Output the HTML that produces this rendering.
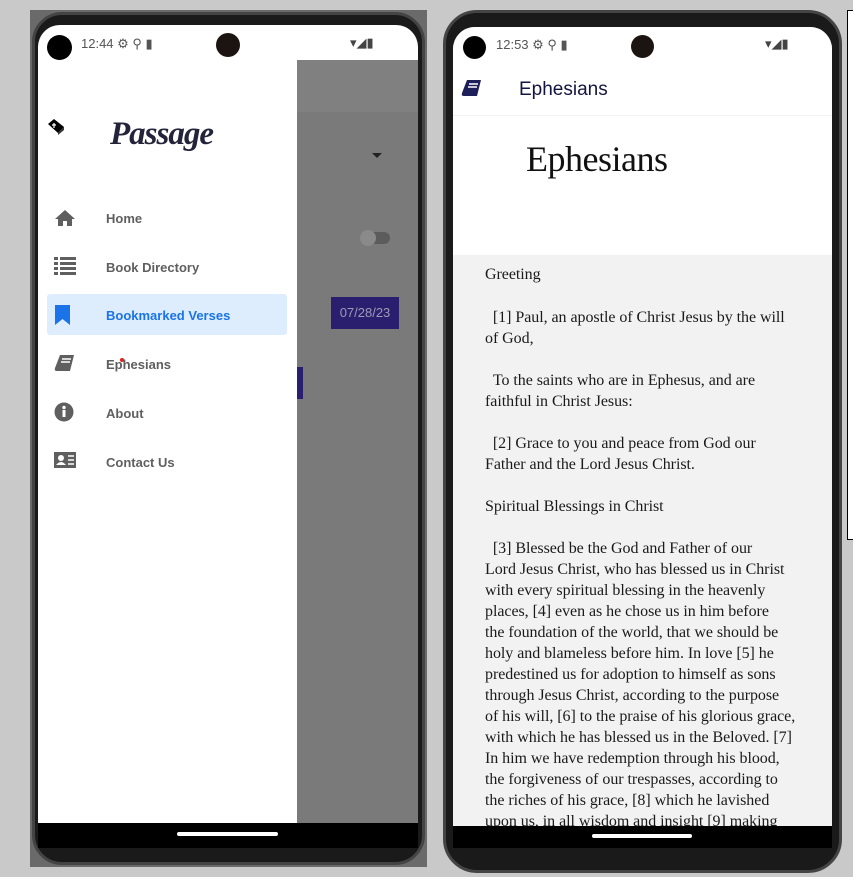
<!DOCTYPE html>
<html><head><meta charset="utf-8"><style>
*{margin:0;padding:0;box-sizing:border-box}
body{width:853px;height:877px;background:#c9c9c9;position:relative;overflow:hidden;font-family:"Liberation Sans",sans-serif}
.abs{position:absolute}
.frame{position:absolute;background:#1a1a1a;border-radius:34px;border:3px solid #444}
.status{font-size:13px;color:#555}
.menu{position:absolute;left:106px;font-size:13px;font-weight:bold;color:#5f5f5f}
.ic{position:absolute;left:54px;width:22px;height:20px}
.bt{position:absolute;left:485px;font-family:"Liberation Serif",serif;font-size:16px;color:#1a1a1a;line-height:21px;white-space:nowrap;letter-spacing:-0.05px}
</style></head><body>
<div class="abs" style="left:30px;top:10px;width:397px;height:857px;background:#6a6a6a"></div>
<div class="frame" style="left:32px;top:12px;width:393px;height:853px;border-radius:30px"></div>
<div class="abs" style="left:38px;top:25px;width:380px;height:810px;background:#fff;border-radius:22px 22px 0 0;overflow:hidden">
  <div class="abs" style="left:259px;top:35px;width:121px;height:52px;background:#808080"></div>
  <div class="abs" style="left:259px;top:87px;width:121px;height:712px;background:#7a7a7a"></div>
  <div class="abs" style="left:334px;top:128px;width:0;height:0;border-left:5px solid transparent;border-right:5px solid transparent;border-top:5px solid #222"></div>
  <div class="abs" style="left:330px;top:207px;width:22px;height:12px;border-radius:6px;background:#5c5c5c"></div>
  <div class="abs" style="left:322px;top:205px;width:16px;height:16px;border-radius:8px;background:#8a8a8a"></div>
  <div class="abs" style="left:293px;top:272px;width:68px;height:32px;background:#2a1f6e;color:#9b9bb5;font-size:13px;line-height:32px;text-align:center">07/28/23</div>
  <div class="abs" style="left:259px;top:342px;width:6px;height:32px;background:#2a1f6e"></div>
</div>
<div class="abs" style="left:38px;top:823px;width:380px;height:25px;background:#000"></div>
<div class="abs" style="left:177px;top:832px;width:101px;height:4px;background:#fff;border-radius:2px"></div>
<div class="abs" style="left:47px;top:35px;width:25px;height:25px;border-radius:50%;background:#000"></div>
<div class="abs status" style="left:81px;top:36px">12:44 ⚙ ⚲ ▮</div>
<div class="abs" style="left:216px;top:33px;width:24px;height:24px;border-radius:50%;background:#1c1410"></div>
<div class="abs status" style="left:350px;top:35px;color:#444">▾◢▮</div>
<svg class="abs" style="left:46px;top:118px" width="22" height="20" viewBox="0 0 22 20"><path d="M2 6 L8 1 L18 9 L12 15 Z" fill="#000"/><path d="M12 15 L18 9 L18 12 L12 17Z" fill="#333"/><path d="M8 5v5M6 7h4" stroke="#fff" stroke-width="1.2"/></svg>
<div class="abs" style="left:110px;top:116px;font-family:'Liberation Serif',serif;font-weight:bold;font-style:italic;font-size:33px;color:#23233a;letter-spacing:-1px">Passage</div>
<svg class="ic" style="top:208px" viewBox="0 0 22 20"><path d="M11 2 L1 11 H4 V18 H9 V13 H13 V18 H18 V11 H21Z" fill="#5f5f5f"/></svg>
<div class="menu" style="top:211px">Home</div>
<svg class="ic" style="top:256px" viewBox="0 0 22 20"><g fill="#5f5f5f"><rect x="0" y="1" width="4" height="3"/><rect x="6" y="1" width="16" height="3"/><rect x="0" y="6" width="4" height="3"/><rect x="6" y="6" width="16" height="3"/><rect x="0" y="11" width="4" height="3"/><rect x="6" y="11" width="16" height="3"/><rect x="0" y="16" width="4" height="3"/><rect x="6" y="16" width="16" height="3"/></g></svg>
<div class="menu" style="top:260px">Book Directory</div>
<div class="abs" style="left:47px;top:294px;width:240px;height:41px;background:#deedfd;border-radius:3px"></div>
<svg class="ic" style="top:305px" viewBox="0 0 22 20"><path d="M1 0 H16 V20 L8.5 14 L1 20Z" fill="#1a73e8"/></svg>
<div class="menu" style="top:308px;color:#1a73e8">Bookmarked Verses</div>
<svg class="ic" style="top:354px" viewBox="0 0 22 20"><path d="M6 1 H20 L16 17 H3 Q0 17 1 14Z" fill="#5f5f5f"/><path d="M8 5h9M7 8h9" stroke="#fff" stroke-width="1.5"/></svg>
<div class="menu" style="top:357px">Ephesians</div>
<div class="abs" style="left:120px;top:358px;width:4px;height:4px;border-radius:50%;background:#e02020"></div>
<svg class="ic" style="top:402px" viewBox="0 0 22 20"><circle cx="10" cy="10" r="9.5" fill="#5f5f5f"/><rect x="8.5" y="8" width="3" height="7" fill="#fff"/><circle cx="10" cy="5.5" r="1.7" fill="#fff"/></svg>
<div class="menu" style="top:406px">About</div>
<svg class="ic" style="top:451px" viewBox="0 0 22 20"><rect x="0" y="1" width="22" height="16" fill="#5f5f5f"/><circle cx="7" cy="7" r="3" fill="#fff"/><path d="M2 14 Q7 8 12 14Z" fill="#fff"/><path d="M14 5h6M14 9h6M14 13h6" stroke="#fff" stroke-width="1.5"/></svg>
<div class="menu" style="top:455px">Contact Us</div>

<div class="frame" style="left:443px;top:10px;width:399px;height:863px;border-radius:34px"></div>
<div class="abs" style="left:453px;top:27px;width:379px;height:800px;background:#f2f2f2;border-radius:22px 22px 0 0;overflow:hidden">
  <div class="abs" style="left:0;top:0;width:379px;height:228px;background:#fff"></div>
  <div class="abs" style="left:0;top:88px;width:379px;height:1px;background:#f2f2f2"></div>
</div>
<div class="abs status" style="left:463px;top:36px;width:23px;height:23px;border-radius:50%;background:#000"></div>
<div class="abs status" style="left:496px;top:37px">12:53 ⚙ ⚲ ▮</div>
<div class="abs" style="left:631px;top:35px;width:23px;height:23px;border-radius:50%;background:#1c1410"></div>
<div class="abs status" style="left:765px;top:36px;color:#444">▾◢▮</div>
<svg class="abs" style="left:461px;top:79px" width="22" height="20" viewBox="0 0 22 20"><path d="M6 1 H20 L16 17 H3 Q0 17 1 14Z" fill="#1e1e5a"/><path d="M8 5h9M7 8h9" stroke="#fff" stroke-width="1.5"/></svg>
<div class="abs" style="left:519px;top:79px;font-size:19px;color:#141440;font-weight:500">Ephesians</div>
<div class="abs" style="left:526px;top:138px;font-family:'Liberation Serif',serif;font-size:36px;color:#111;letter-spacing:-0.5px">Ephesians</div>
<div class="bt" style="top:264px">Greeting</div>
<div class="bt" style="top:307px">&nbsp;&nbsp;[1] Paul, an apostle of Christ Jesus by the will<br>of God,</div>
<div class="bt" style="top:370px">&nbsp;&nbsp;To the saints who are in Ephesus, and are<br>faithful in Christ Jesus:</div>
<div class="bt" style="top:433px">&nbsp;&nbsp;[2] Grace to you and peace from God our<br>Father and the Lord Jesus Christ.</div>
<div class="bt" style="top:496px">Spiritual Blessings in Christ</div>
<div class="bt" style="top:538px">&nbsp;&nbsp;[3] Blessed be the God and Father of our<br>Lord Jesus Christ, who has blessed us in Christ<br>with every spiritual blessing in the heavenly<br>places, [4] even as he chose us in him before<br>the foundation of the world, that we should be<br>holy and blameless before him. In love [5] he<br>predestined us for adoption to himself as sons<br>through Jesus Christ, according to the purpose<br>of his will, [6] to the praise of his glorious grace,<br>with which he has blessed us in the Beloved. [7]<br>In him we have redemption through his blood,<br>the forgiveness of our trespasses, according to<br>the riches of his grace, [8] which he lavished<br>upon us, in all wisdom and insight [9] making</div>
<div class="abs" style="left:453px;top:826px;width:379px;height:22px;background:#000"></div>
<div class="abs" style="left:592px;top:834px;width:100px;height:4px;background:#fff;border-radius:2px"></div>
<div class="abs" style="left:847px;top:10px;width:8px;height:530px;background:#fff;border:1px solid #000;border-right:none"></div>
</body></html>
